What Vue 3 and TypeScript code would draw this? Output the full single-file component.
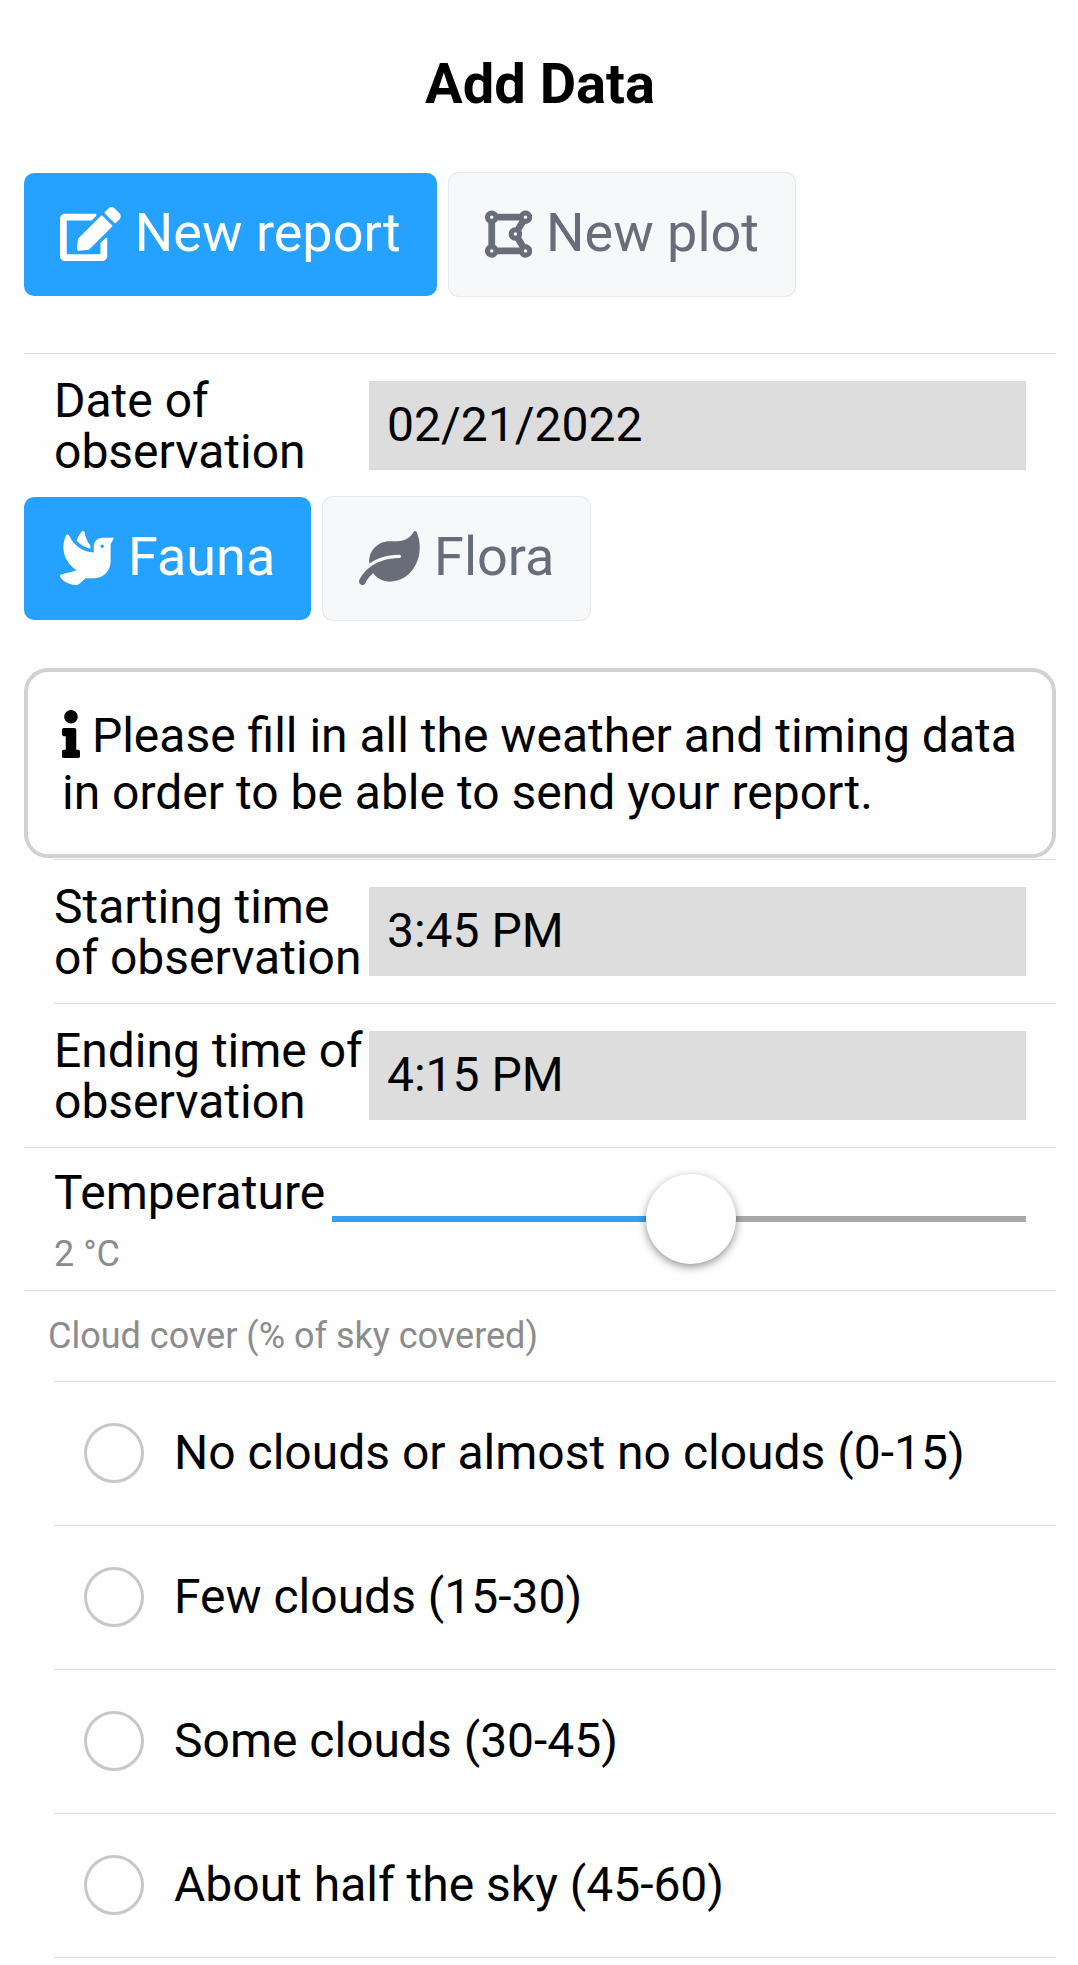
<script setup lang="ts">
import { computed, ref } from 'vue'

interface Tab {
  id: string
  label: string
  width: number
  path: string
}

const reportTabs: Tab[] = [
  {
    id: 'report',
    label: 'New report',
    width: 576,
    path: 'M402.6 83.2l90.2 90.2c3.8 3.8 3.8 10 0 13.8L274.4 405.6l-92.8 10.3c-12.4 1.4-22.9-9.1-21.5-21.5l10.3-92.8L388.8 83.2c3.8-3.8 10-3.8 13.8 0zm162-22.9l-48.8-48.8c-15.2-15.2-39.9-15.2-55.2 0l-35.4 35.4c-3.8 3.8-3.8 10 0 13.8l90.2 90.2c3.8 3.8 10 3.8 13.8 0l35.4-35.4c15.2-15.3 15.2-40 0-55.2zM384 346.2V448H64V128h229.8c3.2 0 6.2-1.3 8.5-3.5l40-40c7.6-7.6 2.2-20.5-8.5-20.5H48C21.5 64 0 85.5 0 112v352c0 26.5 21.5 48 48 48h352c26.5 0 48-21.5 48-48V306.2c0-10.7-12.9-16-20.5-8.5l-40 40c-2.2 2.3-3.5 5.3-3.5 8.5z',
  },
  {
    id: 'plot',
    label: 'New plot',
    width: 448,
    path: 'M384 352c-.35 0-.67.1-1.02.1l-39.2-65.32c5.07-9.17 8.22-19.56 8.22-30.78s-3.14-21.61-8.22-30.78l39.2-65.32c.35.01.67.1 1.02.1 35.35 0 64-28.65 64-64s-28.65-64-64-64c-23.63 0-44.04 12.95-55.12 32H119.12C108.04 44.95 87.63 32 64 32 28.65 32 0 60.65 0 96c0 23.63 12.95 44.04 32 55.12v209.75C12.95 371.96 0 392.37 0 416c0 35.35 28.65 64 64 64 23.63 0 44.04-12.95 55.12-32h209.75c11.09 19.05 31.49 32 55.12 32 35.35 0 64-28.65 64-64 .01-35.35-28.64-64-63.99-64zm-288 8.88V151.12A63.825 63.825 0 0 0 119.12 128h208.36l-38.46 64.1c-.35-.01-.67-.1-1.02-.1-35.35 0-64 28.65-64 64s28.65 64 64 64c.35 0 .67-.1 1.02-.1l38.46 64.1H119.12A63.748 63.748 0 0 0 96 360.88zM272 256c0-8.82 7.18-16 16-16s16 7.18 16 16-7.18 16-16 16-16-7.18-16-16zM400 96c0 8.82-7.18 16-16 16s-16-7.18-16-16 7.18-16 16-16 16 7.18 16 16zM64 80c8.82 0 16 7.18 16 16s-7.18 16-16 16-16-7.18-16-16 7.18-16 16-16zM48 416c0-8.82 7.18-16 16-16s16 7.18 16 16-7.18 16-16 16-16-7.18-16-16zm336 16c-8.82 0-16-7.18-16-16s7.18-16 16-16 16 7.18 16 16-7.18 16-16 16z',
  },
]

const kindTabs: Tab[] = [
  {
    id: 'fauna',
    label: 'Fauna',
    width: 512,
    path: 'M288 167.2v-28.1c-28.2-36.3-47.1-79.3-54.1-125.2-2.1-13.5-19-18.8-27.8-8.3-21.1 24.9-37.7 54.1-48.9 86.5 34.2 38.3 80 64.6 130.8 75.1zM400 64c-44.2 0-80 35.9-80 80.1v59.4C215.6 197.3 127 133 87 41.8c-5.5-12.5-23.2-13.2-29-.9C41.4 76 32 115.2 32 156.6c0 70.8 34.1 136.9 85.1 185.9 13.2 12.7 26.1 23.2 38.9 32.8l-143.9 36C1.4 414-3.4 426.4 2.6 435.7 20 462.6 63 508.2 155.8 512c8 .3 16-2.6 22.1-7.9l65.2-56.1H320c88.4 0 160-71.5 160-159.9V128l32-64H400zm0 96.1c-8.8 0-16-7.2-16-16s7.2-16 16-16 16 7.2 16 16-7.2 16-16 16z',
  },
  {
    id: 'flora',
    label: 'Flora',
    width: 576,
    path: 'M546.2 9.7c-5.6-12.5-21.6-13-28.3-1.2C486.9 62.4 431.4 96 368 96h-80C182 96 96 182 96 288c0 7 .8 13.7 1.5 20.5C161.3 262.8 253.4 224 384 224c8.8 0 16 7.2 16 16s-7.2 16-16 16C132.6 256 26 410.1 2.4 468c-6.6 16.3 1.2 34.9 17.5 41.6 16.4 6.8 35-1.1 41.8-17.3 1.5-3.6 20.9-47.9 71.9-90.6 32.4 43.9 94 85.8 174.9 77.2C465.5 467.5 576 326.7 576 154.3c0-50.2-10.8-102.2-29.8-144.6z',
  },
]

const cloudOptions: string[] = [
  'No clouds or almost no clouds (0-15)',
  'Few clouds (15-30)',
  'Some clouds (30-45)',
  'About half the sky (45-60)',
]

const reportTab = ref('report')
const kindTab = ref('fauna')
const date = ref('02/21/2022')
const startTime = ref('3:45 PM')
const endTime = ref('4:15 PM')
const temperature = ref(2)
const cloudCover = ref('')

const MIN_TEMP = -50
const MAX_TEMP = 50
const fill = computed(() => `${((temperature.value - MIN_TEMP) / (MAX_TEMP - MIN_TEMP)) * 100}%`)
</script>

<template>
  <main class="page">
    <h1 class="title">Add Data</h1>

    <div class="tabs">
      <button
        v-for="tab in reportTabs"
        :key="tab.id"
        type="button"
        class="tab"
        :class="{ active: reportTab === tab.id }"
        @click="reportTab = tab.id"
      >
        <svg class="tab-icon" :viewBox="`0 0 ${tab.width} 512`" aria-hidden="true">
          <path :d="tab.path" fill="currentColor" />
        </svg>
        <span class="tab-label">{{ tab.label }}</span>
      </button>
    </div>

    <form class="form" @submit.prevent>
      <div class="row">
        <label class="label" for="date">Date of observation</label>
        <input id="date" v-model="date" class="field" type="text" />
      </div>

      <div class="tabs">
        <button
          v-for="tab in kindTabs"
          :key="tab.id"
          type="button"
          class="tab"
          :class="{ active: kindTab === tab.id }"
          @click="kindTab = tab.id"
        >
          <svg class="tab-icon" :viewBox="`0 0 ${tab.width} 512`" aria-hidden="true">
            <path :d="tab.path" fill="currentColor" />
          </svg>
          <span class="tab-label">{{ tab.label }}</span>
        </button>
      </div>

      <p class="notice">
        <svg class="info-icon" viewBox="0 0 192 512" aria-hidden="true">
          <path
            d="M20 424.229h20V279.771H20c-11.046 0-20-8.954-20-20V212c0-11.046 8.954-20 20-20h112c11.046 0 20 8.954 20 20v212.229h20c11.046 0 20 8.954 20 20V492c0 11.046-8.954 20-20 20H20c-11.046 0-20-8.954-20-20v-47.771c0-11.046 8.954-20 20-20zM96 0C56.235 0 24 32.235 24 72s32.235 72 72 72 72-32.235 72-72S135.764 0 96 0z"
            fill="currentColor"
          />
        </svg>
        Please fill in all the weather and timing data in order to be able to send your report.
      </p>

      <div class="row inset">
        <label class="label" for="start">Starting time of observation</label>
        <input id="start" v-model="startTime" class="field" type="text" />
      </div>
      <div class="row inset">
        <label class="label" for="end">Ending time of observation</label>
        <input id="end" v-model="endTime" class="field" type="text" />
      </div>

      <div class="row slider-row">
        <div class="slider-label">
          <label for="temperature">Temperature</label>
          <output class="value" for="temperature">{{ temperature }} °C</output>
        </div>
        <input
          id="temperature"
          v-model.number="temperature"
          class="slider"
          type="range"
          :min="MIN_TEMP"
          :max="MAX_TEMP"
          :style="{ '--fill': fill }"
        />
      </div>

      <fieldset class="options">
        <legend class="legend">Cloud cover (% of sky covered)</legend>
        <label v-for="option in cloudOptions" :key="option" class="option">
          <input v-model="cloudCover" class="radio" type="radio" name="clouds" :value="option" />
          <span>{{ option }}</span>
        </label>
      </fieldset>
    </form>
  </main>
</template>

<style>
body {
  margin: 0;
  background: #fefefe;
}
</style>

<style scoped>
.page {
  box-sizing: border-box;
  padding: 50px 22px 0 24px;
  color: #000;
  font-family: Roboto, 'Liberation Sans', sans-serif;
  font-size: 48px;
  line-height: 57px;
}

.title {
  margin: 0 0 55px;
  font-size: 56px;
  line-height: 68px;
  font-weight: 700;
  text-align: center;
}

.tabs {
  display: flex;
  flex-wrap: wrap;
  gap: 12px;
}

.tab {
  display: flex;
  align-items: center;
  gap: 14px;
  height: 123px;
  padding: 0 36px 1px;
  border: 0;
  border-radius: 10px;
  background: #f6f8fa;
  box-shadow: 0 0 0 1px #e6e8ea;
  color: #696d79;
  font: inherit;
  font-size: 54px;
  line-height: 60px;
}

.tab.active {
  background: #25a2ff;
  box-shadow: none;
  color: #fff;
}

.tab-icon {
  display: block;
  height: 54px;
}

.tab-label {
  padding-bottom: 3px;
}

.form {
  margin-top: 57px;
}

.row {
  display: flex;
  align-items: center;
  min-height: 143px;
  padding: 0 30px;
  border-top: 1px solid #d9d9d9;
}

.row.inset {
  margin-left: 30px;
  padding-left: 0;
}

.label {
  flex: 0 0 315px;
  line-height: 51px;
}

.field {
  box-sizing: border-box;
  flex: 1;
  min-width: 0;
  height: 89px;
  padding: 0 18px 2px;
  border: 0;
  border-radius: 0;
  background: #ddd;
  color: #000;
  font: inherit;
}

.notice {
  margin: 48px 0 1px;
  padding: 35px 34px 33px;
  border: 4px solid #d1d1d1;
  border-radius: 24px;
}

.info-icon {
  height: 48px;
  vertical-align: -6px;
}

.slider-row {
  gap: 7px;
  min-height: 142px;
}

.slider-label {
  display: flex;
  flex-direction: column;
  gap: 12px;
}

.value {
  color: #8c8c8c;
  font-size: 36px;
  line-height: 42px;
}

.slider {
  appearance: none;
  flex: 1;
  min-width: 0;
  height: 90px;
  margin: 0;
  background: linear-gradient(to right, #379ff0 var(--fill), #a9a9ab var(--fill)) center / 100% 6px no-repeat;
}

.slider::-webkit-slider-thumb {
  appearance: none;
  width: 90px;
  height: 90px;
  border: 0;
  border-radius: 50%;
  background: #fff;
  box-shadow: 0 3px 8px rgba(0, 0, 0, 0.42);
}

.options {
  min-width: 0;
  margin: 0;
  padding: 0;
  border: 0;
  border-top: 1px solid #d9d9d9;
}

.legend {
  float: left;
  width: 100%;
  box-sizing: border-box;
  padding: 24px;
  color: #8c8c8c;
  font-size: 36px;
  line-height: 42px;
}

.option {
  clear: both;
  display: flex;
  align-items: center;
  gap: 30px;
  min-height: 141px;
  margin-left: 30px;
  padding: 0 0 2px 30px;
  border-top: 1px solid #d9d9d9;
}

.option:last-child {
  border-bottom: 1px solid #d9d9d9;
}

.radio {
  appearance: none;
  box-sizing: border-box;
  flex: none;
  width: 60px;
  height: 60px;
  margin: 0;
  border: 3px solid #c8c8c8;
  border-radius: 50%;
}

.radio:checked {
  border: 16px solid #25a2ff;
}
</style>
